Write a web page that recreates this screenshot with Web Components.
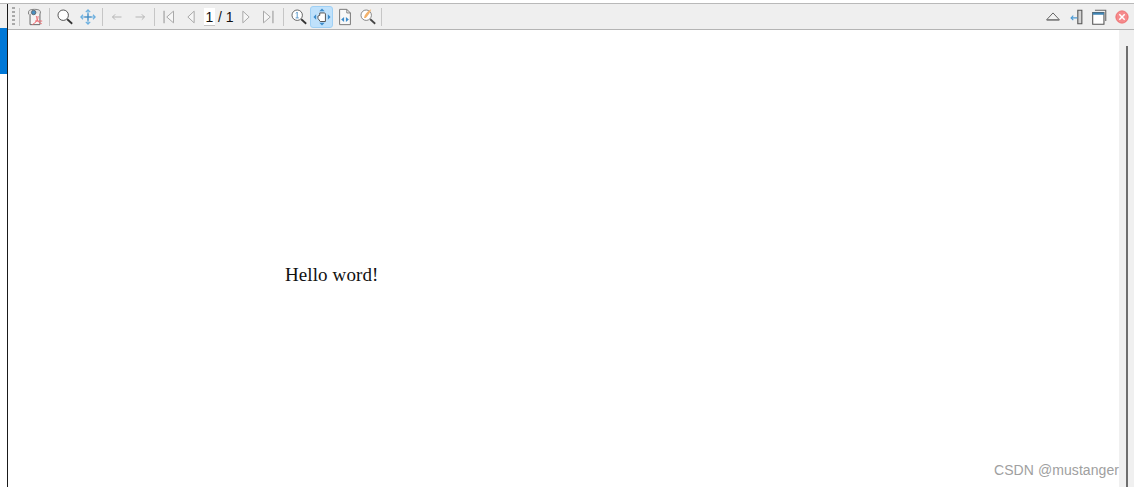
<!DOCTYPE html>
<html>
<head>
<meta charset="utf-8">
<title>Viewer</title>
<style>
html, body { margin: 0; height: 100%; background: #fff; overflow: hidden; }
</style>
</head>
<body>
<viewer-app>
	<viewer-toolbar slot="toolbar">
		<tool-grip></tool-grip>
		<tool-sep></tool-sep>
		<tool-button><svg viewBox="0 0 20 20"><path d="M4.500 5h11v13.500h-11z" fill="#f4f4f4" stroke="#666" stroke-width="1.100"/><path d="M2.800 7V4.500C2.800 2.500 5 1.500 9.500 1.500s6.500 1 6.500 3V6" fill="#e4e4e4" stroke="#777" stroke-width="1"/><circle cx="8.500" cy="5" r="2.500" fill="#4a8fc0" stroke="#555" stroke-width=".8"/><path d="M11.500 9c.5 4 1.500 7 6 8.500M13.500 9c0 4-2.500 7.500-6.500 9.500M10 14.500h8" fill="none" stroke="#ee6a70" stroke-width="1.100"/></svg></tool-button>
		<tool-sep></tool-sep>
		<tool-button><svg viewBox="0 0 20 20"><circle cx="8" cy="8" r="5.800" fill="#fff" stroke="#555" stroke-width="1.100"/><path d="M12.500 12.500l5.500 5" stroke="#333" stroke-width="1.900"/></svg></tool-button>
		<tool-button><svg viewBox="0 0 20 20"><path d="M10 2v16M2 10h16M7.500 4.500L10 2l2.500 2.500M7.500 15.500L10 18l2.500-2.500M4.500 7.500L2 10l2.500 2.500M15.500 7.500L18 10l-2.500 2.500" fill="none" stroke="#6aafe0" stroke-width="1.200"/><path d="M10 6v8M6 10h8" stroke="#3f86bd" stroke-width="1.100"/></svg></tool-button>
		<tool-sep style="width:6px"></tool-sep>
		<tool-button><svg viewBox="0 0 20 20"><path d="M15 10H5M8 7l-3 3 3 3" fill="none" stroke="#b4b4b4" stroke-width="1.100"/></svg></tool-button>
		<tool-button><svg viewBox="0 0 20 20"><path d="M5 10h10M12 7l3 3-3 3" fill="none" stroke="#b4b4b4" stroke-width="1.100"/></svg></tool-button>
		<tool-sep></tool-sep>
		<tool-button narrow><svg viewBox="0 0 20 20"><path d="M4.500 3v14" stroke="#999" stroke-width="1.200"/><path d="M15 3.500L7.500 10l7.500 6.500z" fill="#f6f6f6" stroke="#a8a8a8" stroke-width="1.100"/></svg></tool-button>
		<tool-button narrow><svg viewBox="0 0 20 20"><path d="M13.500 3.500L6.500 10l7 6.500z" fill="#f6f6f6" stroke="#a8a8a8" stroke-width="1.100"/></svg></tool-button>
		<page-field current="1" total="1"></page-field>
		<tool-button narrow><svg viewBox="0 0 20 20"><path d="M6.500 3.500l7 6.500-7 6.500z" fill="#f6f6f6" stroke="#a8a8a8" stroke-width="1.100"/></svg></tool-button>
		<tool-button narrow><svg viewBox="0 0 20 20"><path d="M5 3.500l7.500 6.500L5 16.500z" fill="#f6f6f6" stroke="#a8a8a8" stroke-width="1.100"/><path d="M15.500 3v14" stroke="#999" stroke-width="1.200"/></svg></tool-button>
		<tool-sep style="width:8px"></tool-sep>
		<tool-button><svg viewBox="0 0 20 20"><circle cx="8" cy="8" r="5.800" fill="#fff" stroke="#666" stroke-width="1.100"/><path d="M12.500 12.500l5.500 5" stroke="#333" stroke-width="1.900"/><path d="M8 4.500v6.500M6.600 6L8 4.500M6.300 11h3.400" fill="none" stroke="#5d9acb" stroke-width="1.100"/></svg></tool-button>
		<tool-button active><svg viewBox="0 0 20 20"><path d="M10 .5l3 3H7zM10 19.500l-3-3h6zM.5 10l3-3v6zM19.500 10l-3 3V7z" fill="#3d8ccb"/><path d="M5.500 9l2-.8V5.500h5.500l.8 1v8.500H8l-2.500-3.500z" fill="#fff" stroke="#555" stroke-width="1.100"/></svg></tool-button>
		<tool-button><svg viewBox="0 0 20 20"><path d="M4 1.500h8l4 4V18.500H4z" fill="#f8f8f8" stroke="#777" stroke-width="1.100"/><path d="M12 1.500v4h4" fill="none" stroke="#777"/><path d="M9 10l-3.300 2.800L9 15.500zM11 10l3.300 2.800L11 15.500z" fill="#3d8ccb"/></svg></tool-button>
		<tool-button><svg viewBox="0 0 20 20"><circle cx="8" cy="8" r="5.800" fill="#fff" stroke="#888" stroke-width="1.100"/><path d="M12.500 12.500l5.500 5" stroke="#444" stroke-width="1.900"/><path d="M5.500 11c.5-3.500 3.500-7 8-9.500-.5 3.500-3.500 7-6 9.500z" fill="#f3b26c"/></svg></tool-button>
		<tool-sep style="width:5px"></tool-sep>
		<tool-spacer></tool-spacer>
		<tool-button><svg viewBox="0 0 20 20"><path d="M10 5.500L3 13h14z" fill="#f2f2f2" stroke="#555" stroke-width="1"/><path d="M3 13.500h14" stroke="#888" stroke-width="1.500"/></svg></tool-button>
		<tool-button><svg viewBox="0 0 20 20"><path d="M12 2.500h4.500v15H12z" fill="#d4d4d4" stroke="#555" stroke-width="1.200"/><path d="M11.500 11H4.500M7 8.500L4.500 11 7 13.500" fill="none" stroke="#4d9bd5" stroke-width="1.200"/></svg></tool-button>
		<tool-button><svg viewBox="0 0 20 20"><path d="M5.500 2.500h12v12" fill="none" stroke="#666" stroke-width="1.200"/><path d="M3 5h12.500v13H3z" fill="#fff" stroke="#555" stroke-width="1.200"/><path d="M3 5h12.500v2.500H3z" fill="#3f84b4"/></svg></tool-button>
		<tool-button><svg viewBox="0 0 20 20"><circle cx="10" cy="10" r="6.800" fill="#f58a8c" stroke="#e66" stroke-width="1"/><path d="M7 7l6 6M13 7l-6 6" stroke="#fff" stroke-width="1.700"/></svg></tool-button>
	</viewer-toolbar>
	<viewer-page slot="page">Hello word!</viewer-page>
	<page-scrollbar slot="scroll"></page-scrollbar>
	<water-mark slot="mark">CSDN @mustanger</water-mark>
</viewer-app>
<script>
// small helper, every element just stamps its html in an open shadow root
function shadow(el, html) {
	el.attachShadow({ mode: 'open' })
	el.shadowRoot.innerHTML = html
}

class ViewerApp extends HTMLElement {
	constructor() {
		super()
		shadow(this, `
		<style>
		:host { display: grid; height: 487px; width: 1134px; grid-template-columns: 7px 1px 1fr; grid-template-rows: 4px 25px 1fr; background: #fff; position: relative; overflow: hidden; }
		#edge { grid-column: 1 / 4; background: #fff; border-bottom: 1px solid #b9b9b9; box-sizing: border-box; }
		#rail { grid-column: 1; grid-row: 2 / 4; display: flex; flex-direction: column; }
		#rail .top { height: 24px; background: #f0f0f0; }
		#rail .blue { height: 46px; background: #0078d7; }
		#line { grid-column: 2; grid-row: 2 / 4; background: #1a1a1a; }
		#bar { grid-column: 3; grid-row: 2; min-width: 0; display: flex; }
		#body { grid-column: 3; grid-row: 3; display: flex; min-height: 0; border-top: 1px solid #b4b4b4; }
		#page { flex: 1; min-width: 0; display: flex; }
		</style>
		<div id="edge"></div>
		<div id="rail"><div class="top"></div><div class="blue"></div></div>
		<div id="line"></div>
		<div id="bar"><slot name="toolbar"></slot></div>
		<div id="body"><div id="page"><slot name="page"></slot></div><slot name="scroll"></slot></div>
		<slot name="mark"></slot>
		`)
	}
}

class ViewerToolbar extends HTMLElement {
	constructor() {
		super()
		shadow(this, `
		<style>
		:host { display: flex; flex: 1; align-items: center; height: 25px; background: #efefef; box-sizing: border-box; padding-left: 4px; padding-right: 1px; }
		</style>
		<slot></slot>
		`)
	}
}

class ToolGrip extends HTMLElement {
	constructor() {
		super()
		shadow(this, `
		<style>
		:host { display: block; width: 3px; height: 19px; margin-right: 1px; background: repeating-linear-gradient(to bottom, #a9a9a9 0 2px, transparent 2px 4px); }
		</style>
		`)
	}
}

class ToolSep extends HTMLElement {
	constructor() {
		super()
		shadow(this, `
		<style>
		:host { display: flex; justify-content: center; width: 7px; height: 18px; }
		div { width: 1px; background: #c6c6c6; }
		</style>
		<div></div>
		`)
	}
}

class ToolSpacer extends HTMLElement {
	constructor() {
		super()
		shadow(this, `<style>:host { display: block; flex: 1; }</style>`)
	}
}

class ToolButton extends HTMLElement {
	constructor() {
		super()
		shadow(this, `
		<style>
		:host { display: flex; align-items: center; justify-content: center; width: 23px; height: 22px; box-sizing: border-box; border: 1px solid transparent; border-radius: 3px; }
		:host([narrow]) { width: 22px; }
		:host([active]) { background: #bfe1fb; border-color: #9fd0f5; }
		::slotted(svg) { width: 18px; height: 18px; display: block; flex: none; }
		</style>
		<slot></slot>
		`)
	}
}

class PageField extends HTMLElement {
	constructor() {
		super()
		shadow(this, `
		<style>
		:host { display: flex; align-items: center; width: 33px; height: 22px; font: 14px "Liberation Sans", sans-serif; color: #111; }
		.num { width: 11px; height: 18px; line-height: 18px; background: #fff; text-align: center; margin: 0 3px 0 2px; border-bottom: 1px solid #c4c4c4; box-sizing: border-box; }
		.rest { white-space: pre; }
		</style>
		<span class="num">${this.getAttribute('current')}</span><span class="rest">/ ${this.getAttribute('total')}</span>
		`)
	}
}

class ViewerPage extends HTMLElement {
	constructor() {
		super()
		shadow(this, `
		<style>
		:host { display: block; flex: 1; background: #fff; padding: 233px 0 0 277px; font: 19px/24px "Liberation Serif", serif; letter-spacing: .1px; color: #111; box-sizing: border-box; }
		</style>
		<slot></slot>
		`)
	}
}

class PageScrollbar extends HTMLElement {
	constructor() {
		super()
		shadow(this, `
		<style>
		:host { display: flex; justify-content: center; width: 15px; background: #f0f0f0; padding-top: 16px; box-sizing: border-box; height: 100%; }
		div { width: 2px; background: #6e6e6e; }
		</style>
		<div></div>
		`)
	}
}

class WaterMark extends HTMLElement {
	constructor() {
		super()
		shadow(this, `
		<style>
		:host { position: absolute; right: 15px; bottom: 8px; font: 14px/18px "Liberation Sans", sans-serif; letter-spacing: .07px; color: #a0a0a0; white-space: nowrap; }
		</style>
		<slot></slot>
		`)
	}
}

customElements.define('viewer-app', ViewerApp)
customElements.define('viewer-toolbar', ViewerToolbar)
customElements.define('tool-grip', ToolGrip)
customElements.define('tool-sep', ToolSep)
customElements.define('tool-spacer', ToolSpacer)
customElements.define('tool-button', ToolButton)
customElements.define('page-field', PageField)
customElements.define('viewer-page', ViewerPage)
customElements.define('page-scrollbar', PageScrollbar)
customElements.define('water-mark', WaterMark)
</script>
</body>
</html>
